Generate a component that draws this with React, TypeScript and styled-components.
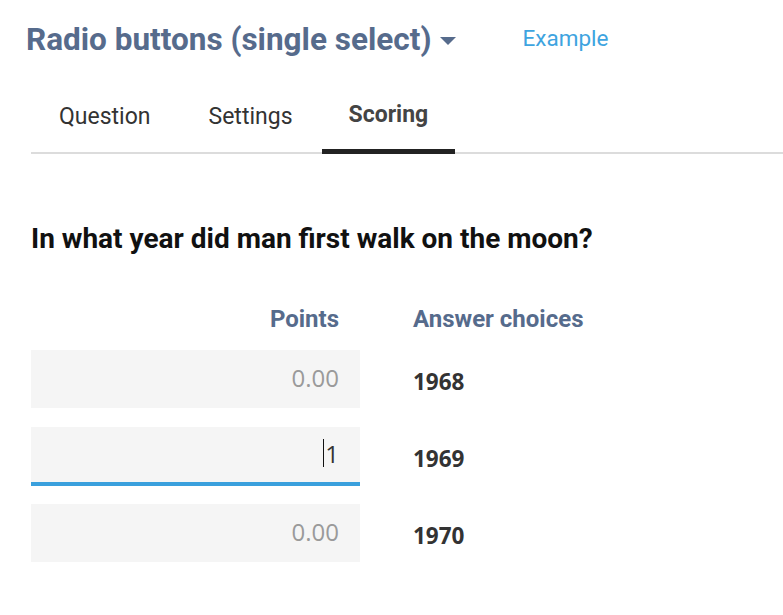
import styled, { createGlobalStyle } from 'styled-components'

const GlobalStyle = createGlobalStyle`
  body {
    margin: 0;
    background: #fff;
    font-family: Roboto, "Liberation Sans", sans-serif;
  }
`

const choices = [
    { points: '', placeholder: '0.00', label: '1968', focused: false },
    { points: '1', placeholder: '0.00', label: '1969', focused: true },
    { points: '', placeholder: '0.00', label: '1970', focused: false },
]

const App = () => {
    return (
        <>
            <GlobalStyle />
            <Page>
                <Header>
                    <TitleButton>
                        Radio buttons (single select)
                        <Caret />
                    </TitleButton>
                    <ExampleLink href="#">Example</ExampleLink>
                </Header>
                <TabBar>
                    <Tab>Question</Tab>
                    <Tab>Settings</Tab>
                    <Tab $active>Scoring</Tab>
                </TabBar>
                <QuestionText>In what year did man first walk on the moon?</QuestionText>
                <ScoreGrid>
                    <ColumnHead $right>Points</ColumnHead>
                    <ColumnHead>Answer choices</ColumnHead>
                    {choices.map((c) => (
                        <Row key={c.label}>
                            <PointsField $focused={c.focused}>
                                {c.points ? (
                                    <Value>
                                        <Cursor />
                                        {c.points}
                                    </Value>
                                ) : (
                                    <Placeholder>{c.placeholder}</Placeholder>
                                )}
                            </PointsField>
                            <Choice>{c.label}</Choice>
                        </Row>
                    ))}
                </ScoreGrid>
            </Page>
        </>
    )
}

const Page = styled.div`
    padding: 23px 0 40px 31px;
`

const Header = styled.div`
    display: flex;
    align-items: center;
    height: 33px;
`

const TitleButton = styled.div`
    display: flex;
    align-items: center;
    margin-left: -5px;
    font-size: 31.5px;
    font-weight: 700;
    line-height: 33px;
    color: #566b8c;
    white-space: nowrap;
`

const Caret = styled.span`
    width: 0;
    height: 0;
    margin-left: 9px;
    margin-top: 3px;
    border-left: 8.5px solid transparent;
    border-right: 8.5px solid transparent;
    border-top: 8px solid #566b8c;
`

const ExampleLink = styled.a`
    margin-left: 66px;
    margin-bottom: 4px;
    font-size: 22.5px;
    color: #3ea4e0;
    text-decoration: none;
`

const TabBar = styled.div`
    display: flex;
    margin-top: 41px;
    border-bottom: 2px solid #dcdcdc;
`

const Tab = styled.div<{ $active?: boolean }>`
    padding: 0 ${(p) => (p.$active ? '27px' : '29px')};
    height: 57px;
    box-sizing: border-box;
    margin-bottom: -2px;
    font-size: 23px;
    line-height: ${(p) => (p.$active ? '36px' : '40px')};
    color: ${(p) => (p.$active ? '#444' : '#333')};
    font-weight: ${(p) => (p.$active ? 700 : 400)};
    border-bottom: 5px solid ${(p) => (p.$active ? '#222' : 'transparent')};

    &:first-child {
        padding-left: 28px;
    }
`

const QuestionText = styled.div`
    margin-top: 69px;
    font-size: 28px;
    font-weight: 700;
    line-height: 32px;
    color: #111;
`

const ScoreGrid = styled.div`
    display: grid;
    grid-template-columns: 329px 1fr;
    column-gap: 53px;
    margin-top: 50px;
`

const ColumnHead = styled.div<{ $right?: boolean }>`
    font-size: 24px;
    font-weight: 700;
    line-height: 28px;
    color: #566b8c;
    text-align: ${(p) => (p.$right ? 'right' : 'left')};
    padding-right: ${(p) => (p.$right ? '21px' : '0')};
    margin-bottom: 17px;
`

const Row = styled.div`
    display: contents;
`

const PointsField = styled.div<{ $focused?: boolean }>`
    height: ${(p) => (p.$focused ? '59px' : '58px')};
    margin-bottom: ${(p) => (p.$focused ? '18px' : '19px')};
    box-sizing: border-box;
    background: #f5f5f5;
    display: flex;
    align-items: center;
    justify-content: flex-end;
    padding: 0 21px 3px 0;
    border-bottom: ${(p) => (p.$focused ? '4px solid #3aa0dd' : 'none')};
    font-family: "Open Sans", "Noto Sans", sans-serif;
    font-size: 24px;
`

const Placeholder = styled.span`
    color: #9a9a9a;
`

const Value = styled.span`
    display: flex;
    align-items: center;
    color: #333;
`

const Cursor = styled.span`
    width: 1px;
    height: 28px;
    background: #111;
    margin-right: 1px;
`

const Choice = styled.div`
    height: 58px;
    display: flex;
    align-items: center;
    padding-top: 5px;
    box-sizing: border-box;
    font-family: "Open Sans", "Noto Sans", sans-serif;
    font-size: 22.5px;
    font-weight: 700;
    color: #333;
`

export default App
